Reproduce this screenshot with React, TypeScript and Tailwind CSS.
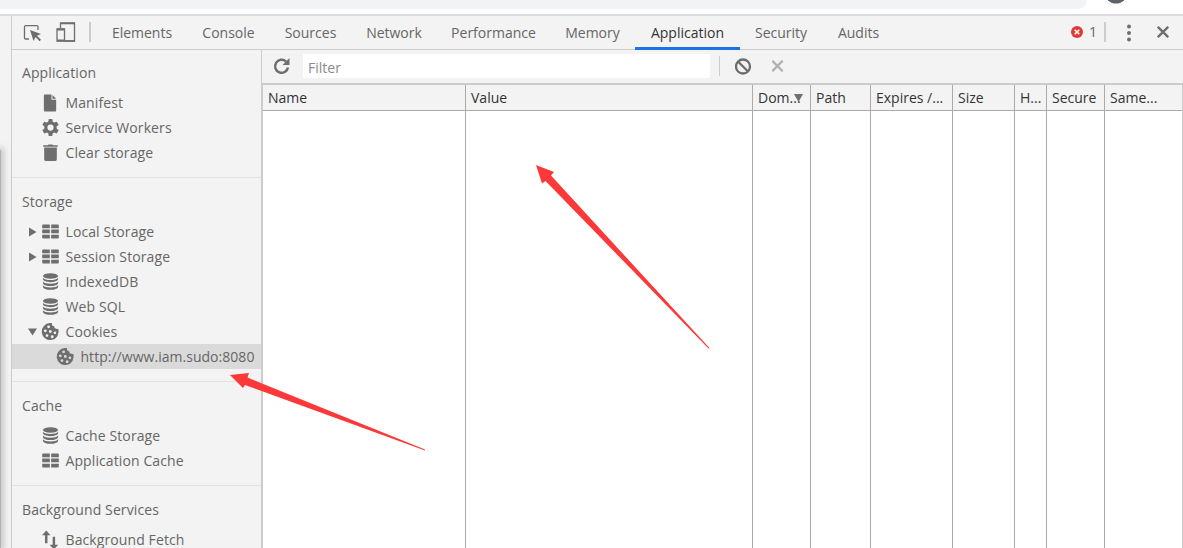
import { type ReactNode } from "react";

const TABS = [
  { label: "Elements",    size: "w-[90px]" },
  { label: "Console",     size: "w-[83px]" },
  { label: "Sources",     size: "w-[81px]" },
  { label: "Network",     size: "w-[86px]" },
  { label: "Performance", size: "w-[113px]" },
  { label: "Memory",      size: "w-[85px]" },
  { label: "Application", size: "w-[105px]", active: true },
  { label: "Security",    size: "w-[82px]" },
  { label: "Audits",      size: "w-[73px]" },
];

const COLUMNS = [
  { label: "Name",       size: "w-[203px]" },
  { label: "Value",      size: "w-[287px]" },
  { label: "Dom...",     size: "w-[58px]", sorted: true },
  { label: "Path",       size: "w-[60px]" },
  { label: "Expires /...", size: "w-[82px]" },
  { label: "Size",       size: "w-[62px]" },
  { label: "H...",       size: "w-[32px]" },
  { label: "Secure",     size: "w-[58px]" },
  { label: "Same...",    size: "w-[77px]" },
];

type IconName = "file" | "gear" | "trash" | "table" | "database" | "cookie" | "fetch";

type Item = {
  label: string;
  icon: IconName;
  arrow?: "right" | "down";
  selected?: boolean;
};

const SECTIONS: { title: string; items: Item[] }[] = [
  {
    title: "Application",
    items: [
      { label: "Manifest", icon: "file" },
      { label: "Service Workers", icon: "gear" },
      { label: "Clear storage", icon: "trash" },
    ],
  },
  {
    title: "Storage",
    items: [
      { label: "Local Storage", icon: "table", arrow: "right" },
      { label: "Session Storage", icon: "table", arrow: "right" },
      { label: "IndexedDB", icon: "database" },
      { label: "Web SQL", icon: "database" },
      { label: "Cookies", icon: "cookie", arrow: "down" },
      { label: "http://www.iam.sudo:8080", icon: "cookie", selected: true },
    ],
  },
  {
    title: "Cache",
    items: [
      { label: "Cache Storage", icon: "database" },
      { label: "Application Cache", icon: "table" },
    ],
  },
  {
    title: "Background Services",
    items: [{ label: "Background Fetch", icon: "fetch" }],
  },
];

const ICONS: Record<IconName, ReactNode> = {
  file: <path d="M3 .5h7v5.500h5V17.500a1 1 0 0 1-1 1H3a1 1 0 0 1-1-1v-16a1 1 0 0 1 1-1zM11 1l4 4h-4z" />,
  gear: (
    <path
      fillRule="evenodd"
      d="M7.200 0h3.600l.6 2.900 1.500.9 2.700-1L17.600 6l-2.100 2v2l2.100 2-2 3.200-2.700-1-1.500.9-.6 2.900H7.200l-.6-2.900-1.500-.9-2.700 1L.4 12l2.100-2V8L.4 6l2-3.200 2.700 1 1.500-.9zM9 5.700a3.300 3.300 0 1 0 0 6.600 3.300 3.300 0 0 0 0-6.600z"
    />
  ),
  trash: <path d="M1.300 1.300H6L7 .4h4l1 .9h4.700v1.600H1.300zM2.300 3.800h13.400v12.200a2 2 0 0 1-2 2H4.300a2 2 0 0 1-2-2z" />,
  table: (
    <path d="M1.200 1.500H8.300v4H.2v-3a1 1 0 0 1 1-1zM9.700 1.500h7.100a1 1 0 0 1 1 1v3H9.700zM.2 6.900h8.100v4H.2zM9.700 6.900h8.100v4H9.700zM.2 12.300h8.100v4H1.200a1 1 0 0 1-1-1zM9.700 12.300h8.100v3a1 1 0 0 1-1 1H9.700z" />
  ),
  database: (
    <>
      <ellipse cx="9" cy="3.200" rx="8" ry="2.900" />
      <path d="M1 5c1.500 3.200 14.500 3.200 16 0v1.700c-1 4-15 4-16 0zM1 9c1.500 3.200 14.500 3.200 16 0v1.700c-1 4-15 4-16 0zM1 13c1.500 3.200 14.500 3.200 16 0v1.700c-1 4-15 4-16 0z" />
    </>
  ),
  cookie: (
    <path
      fillRule="evenodd"
      d="M8.500 0c.8 0 1.500.1 2.100.2-.3 1.900.6 3.100 2.300 3.300-.1 1.800 1.400 3.200 4.400 2.900A9 9 0 1 1 8.500 0zM7 2.500a1.500 1.500 0 1 0 0 3 1.500 1.500 0 0 0 0-3zM3.500 6.800a1.500 1.500 0 1 0 0 3 1.500 1.500 0 0 0 0-3zM8.800 7.500a1.500 1.500 0 1 0 0 3 1.500 1.500 0 0 0 0-3zM13.700 9a1.400 1.400 0 1 0 0 2.800 1.400 1.400 0 0 0 0-2.800zM5.300 11.800a1.500 1.500 0 1 0 0 3 1.500 1.500 0 0 0 0-3zM10.800 13a1.500 1.500 0 1 0 0 3 1.500 1.500 0 0 0 0-3z"
    />
  ),
  fetch: <path d="M4.500-.5 9 4.500H5.800V13H3.200V4.500H0zM11.300 6h2.600v8.500h3.300L12.600 19.500 8 14.500h3.300z" />,
};

function SidebarIcon({ name }: { name: IconName }) {
  return (
    <svg width="17" height="18" viewBox="0 0 18 19" className="shrink-0 overflow-visible" fill="#6e6e6e">
      {ICONS[name]}
    </svg>
  );
}

function SidebarItem({ label, icon, arrow, selected }: Item) {
  return (
    <div className={`flex h-[25px] items-center ${selected ? "bg-[#dadada] pl-[29px]" : "pl-[14px]"}`}>
      <span className="flex w-4 shrink-0 items-center pl-[3px]">
        {arrow === "right" && (
          <svg width="8" height="10" fill="#6e6e6e"><path d="M0 0.500 7.500 5 0 9.500z" /></svg>
        )}
        {arrow === "down" && (
          <svg width="9" height="8" className="-ml-px" fill="#6e6e6e"><path d="M0 0.500h9L4.500 7.500z" /></svg>
        )}
      </span>
      <SidebarIcon name={icon} />
      <span className={`ml-[6.5px] ${selected ? "tracking-[0.03px]" : ""}`}>{label}</span>
    </div>
  );
}

function Sidebar() {
  return (
    <aside className="w-[250px] shrink-0 overflow-hidden border-r border-[#ccc] bg-[#f3f3f3] tracking-[0.1px] text-[#666]">
      {SECTIONS.map(({ title, items }, i) => (
        <section key={title} className={i === 0 ? "pt-[10px] pb-3" : "border-t border-[#e2e2e2] pt-[11px] pb-3"}>
          <h2 className="h-[30px] pl-[10px] leading-[25px]">{title}</h2>
          {items.map((item) => <SidebarItem key={item.label} {...item} />)}
        </section>
      ))}
    </aside>
  );
}

function TabBar() {
  return (
    <nav className="flex h-[34px] shrink-0 border-b border-[#ccc] bg-[#f3f3f3] text-[#666]">
      <div className="flex w-[85px] shrink-0 items-center pl-[11px]">
        <svg width="18" height="18" className="mr-[15px] shrink-0" fill="none">
          <path d="M6 15H2.500Q1.500 15 1.500 14V3Q1.500 1.700 2.500 1.700H14Q15 1.700 15 3V6" stroke="#6e6e6e" strokeWidth="1.300" />
          <path d="M7 6l11 4-4 1.800 4 4-1.400 1.400-4-4.200L10.500 17z" fill="#6e6e6e" />
        </svg>
        <svg width="20" height="20" className="mt-[-2px] shrink-0" fill="none" stroke="#6e6e6e" strokeWidth="1.300">
          <path d="M4.500 6V1.500H18.500v17.500H9" />
          <path d="M4 1h15M9 19h10" strokeWidth="1.600" />
          <path d="M1 7h7.500v12H1z" />
          <path d="M1 7.500h8M1 18.500h8" strokeWidth="2" />
        </svg>
        <span className="mt-[-2px] ml-[13px] h-5 w-[2px] bg-[#ccc]" />
      </div>
      {TABS.map(({ label, size, active }) => (
        <div
          key={label}
          className={`${size} flex h-[34px] shrink-0 items-center justify-center pb-[2px] ${active ? "border-b-[3px] border-[#1a73e8] pt-[3px] text-[#333]" : ""}`}
        >
          {label}
        </div>
      ))}
      <div className="ml-auto flex items-center">
        <svg width="12" height="12" viewBox="0 0 12 12" className="mt-[-2px]">
          <circle cx="6" cy="6" r="6" fill="#e3363b" />
          <path d="M3.700 3.700l4.600 4.600M8.300 3.700L3.700 8.300" stroke="#fff" strokeWidth="1.600" />
        </svg>
        <span className="mt-[-2px] ml-[6px] w-[9px]">1</span>
        <span className="mt-[-2px] ml-[6px] h-5 w-[2px] bg-[#ccc]" />
        <svg width="4" height="18" className="ml-[21px]" fill="#6e6e6e">
          <circle cx="2" cy="2.500" r="2" />
          <circle cx="2" cy="9" r="2" />
          <circle cx="2" cy="15.500" r="2" />
        </svg>
        <svg width="12" height="12" className="mt-[-2px] mr-[14px] ml-[26px]" stroke="#6e6e6e" strokeWidth="2.300">
          <path d="M.8.8l10.400 10.400M11.200.8L.8 11.200" />
        </svg>
      </div>
    </nav>
  );
}

function Toolbar() {
  return (
    <div className="flex h-[35px] shrink-0 border-b-2 border-[#ccc] bg-[#f3f3f3]">
      <svg width="17" height="17" className="mt-2 ml-[11px]" fill="none">
        <path d="M15 9.500A6.500 6.500 0 1 1 13 3.500" stroke="#6e6e6e" strokeWidth="2.500" />
        <path d="M16.500 0v7H9.500z" fill="#6e6e6e" />
      </svg>
      <div className="mt-1 ml-[13px] h-6 w-[407px] bg-white pl-[5px] leading-[27px] text-[#8a8a8a]">Filter</div>
      <span className="mt-[6px] ml-[9px] h-5 w-px bg-[#ccc]" />
      <svg width="17" height="17" className="mt-2 ml-[15px]" fill="none" stroke="#6e6e6e" strokeWidth="2.300">
        <circle cx="8" cy="8.500" r="7" />
        <path d="M3 3.500l10 10" />
      </svg>
      <svg width="12" height="12" className="mt-[10px] ml-5" stroke="#b0b0b0" strokeWidth="2.300">
        <path d="M.3.8l10.400 10.400M10.700.8L.3 11.200" />
      </svg>
    </div>
  );
}

function CookieTable() {
  return (
    <div className="flex grow border-r border-l border-[#ccc] bg-white pr-px text-[#333]">
      {COLUMNS.map(({ label, size, sorted }, i) => (
        <div
          key={label}
          className={`${size} flex shrink-0 flex-col ${i < COLUMNS.length - 1 ? "border-r border-[#aaa]" : ""}`}
        >
          <div className="relative h-[26px] shrink-0 border-b border-[#aaa] bg-[#f3f3f3] pl-[5px] leading-[25px] whitespace-nowrap">
            {label}
            {sorted && (
              <svg width="9" height="8" className="absolute top-[9px] right-[7px]" fill="#6e6e6e">
                <path d="M0 0h9L4.500 8z" />
              </svg>
            )}
          </div>
        </div>
      ))}
    </div>
  );
}

export default function App() {
  return (
    <div className="relative flex h-[548px] w-[1183px] flex-col overflow-hidden bg-white font-['Open_Sans','Noto_Sans',sans-serif] text-[14px] whitespace-nowrap">
      {/* Bottom edge of the browser toolbar */}
      <div className="flex h-4 shrink-0 border-b-2 border-[#dadce0] bg-white">
        <div className="h-[9px] w-[1087px] rounded-br-[12px] bg-[#f1f3f4]" />
        <svg width="22" height="5" className="ml-[18px]" fill="#5f6368">
          <circle cx="11" cy="-8" r="11.500" />
        </svg>
      </div>

      <div className="flex min-h-0 grow">
        <div className="flex w-3 shrink-0 flex-col justify-end overflow-hidden border-r border-[#ccc] bg-[#f3f3f3]">
          <div className="h-[398px] w-px bg-[#b4b4b4] shadow-[0_0_6px_2px_#b4b4b4]" />
        </div>
        <div className="flex min-w-0 grow flex-col">
          <TabBar />
          <div className="flex min-h-0 grow">
            <Sidebar />
            <main className="flex min-w-0 grow flex-col">
              <Toolbar />
              <CookieTable />
            </main>
          </div>
        </div>
      </div>

      {/* Annotation arrows */}
      <svg width="1183" height="548" className="pointer-events-none absolute inset-0" fill="#fc3838">
        <path d="M536 165l18 7-3 3.500L709.500 348l-1 .5L545.500 181l-3.500 2.500z" />
        <path d="M230 375l19-2-1.500 4.500L425 449.500v1L245 385l-2 3z" />
      </svg>
    </div>
  );
}
